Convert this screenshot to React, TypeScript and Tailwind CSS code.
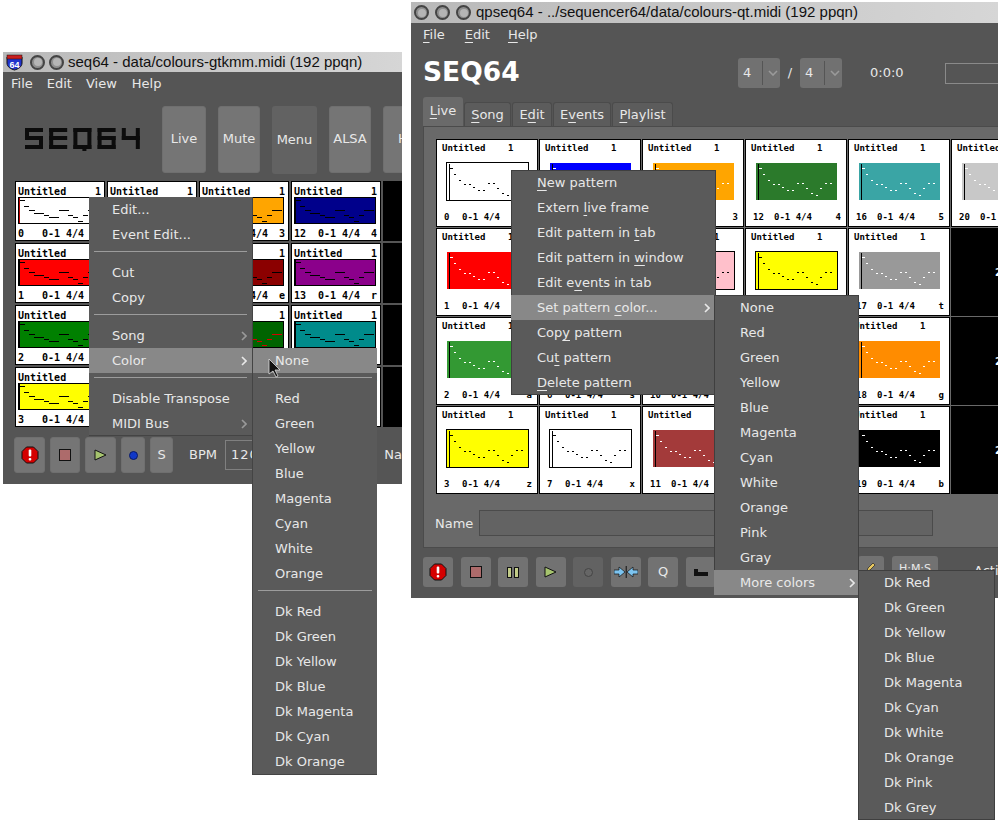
import React from "react";

const NOTES_QT: [number, number, number][] = [
  [4, 6, 3], [8, 12, 2], [13, 18, 2], [18, 22, 2], [23, 22, 2], [27, 25, 2], [32, 28, 2], [37, 28, 2],
  [42, 21, 2], [47, 21, 2], [51, 26, 2], [56, 31, 2], [61, 33, 2], [65, 26, 2], [70, 21, 2], [75, 21, 2],
];
const NOTES_GTK: [number, number, number][] = [
  [2, 3, 5], [6, 9, 5], [11, 13, 6], [16, 16, 10], [26, 18, 5], [31, 20, 10], [41, 13, 10], [50, 18, 5],
  [55, 20, 5], [60, 24, 5], [65, 18, 5], [70, 13, 10],
];

function QtPreview({ fill, border, note }: { fill: string; border: string; note: string }) {
  return (
    <svg width="83" height="39" className="block">
      <rect x="0.5" y="0.5" width="82" height="38" fill={fill} stroke={border} />
      <rect x="3" y="2" width="1" height="36" fill="#000" />
      {NOTES_QT.map(([x, y, w], i) => (
        <rect key={i} x={x} y={y} width={w} height="1" fill={note} />
      ))}
    </svg>
  );
}

function GtkPreview({ fill, bar, last }: { fill: string; bar: string; last?: string }) {
  return (
    <svg width="82" height="27" className="block">
      <rect x="0.5" y="0.5" width="81" height="26" fill={fill} stroke="#000" />
      <rect x="1" y="1" width="1" height="25" fill={bar} />
      {NOTES_GTK.map(([x, y, w], i) => (
        <rect key={i} x={x} y={y} width={w} height="1" fill={last && i > 6 ? last : "#000"} />
      ))}
    </svg>
  );
}

function GtkCell({ n, k, fill, bar = "#000", last }: { n: string; k: string; fill: string; bar?: string; last?: string }) {
  return (
    <div className="h-[60px] w-[90px] border border-black bg-white px-[2px] font-['DejaVu_Sans_Mono',monospace] text-[10px] font-bold leading-[12px] text-black">
      <div className="flex h-[15px] items-center justify-between pr-px pt-[5px]">
        <span>Untitled</span>
        <span>1</span>
      </div>
      <GtkPreview fill={fill} bar={bar} last={last} />
      <div className="flex h-[15px] items-center pr-px pt-[5px]">
        <span className="w-[24px]">{n}</span>
        <span className="whitespace-pre">0-1 4/4</span>
        <span className="ml-auto">{k}</span>
      </div>
    </div>
  );
}

function QtCell({ n, k, fill, border = "#fff", note = "#fff" }: { n: string; k: string; fill: string; border?: string; note?: string }) {
  return (
    <div className="h-[88px] w-[102px] border border-black bg-white font-['DejaVu_Sans_Mono',monospace] text-[9px] font-bold text-black">
      <div className="flex h-[22px] items-start pl-[5px] pt-[3px] leading-[11px]">
        <span className="w-[66px]">Untitled</span>
        <span>1</span>
      </div>
      <div className="ml-[9px]">
        <QtPreview fill={fill} border={border} note={note} />
      </div>
      <div className="mt-[11px] flex items-center pl-[7px] pr-[5px] leading-[11px]">
        <span className={n.length > 1 ? "w-[21px]" : "w-[18px]"}>{n}</span>
        <span className="whitespace-pre">0-1 4/4</span>
        <span className="ml-auto">{k}</span>
      </div>
    </div>
  );
}

function BlackCell({ label, h }: { label?: string; h: string }) {
  return (
    <div className={`flex w-[102px] items-center justify-center bg-black text-[10px] font-bold text-white ${h}`}>
      {label}
    </div>
  );
}

function Chevron({ dim }: { dim?: boolean }) {
  return (
    <svg width="6" height="10" viewBox="0 0 6 10" className="block">
      <path d="M1 1l4 4-4 4" fill="none" stroke={dim ? "#9a9a9a" : "#e8e8e8"} strokeWidth="1.6" />
    </svg>
  );
}

function Item({ pl, children, active, sub, dimSub, chevronRight = "pr-[5px]" }: { pl: string; children: React.ReactNode; active?: boolean; sub?: boolean; dimSub?: boolean; chevronRight?: string }) {
  return (
    <div className={`flex h-[25px] items-center whitespace-nowrap ${pl} ${chevronRight} ${active ? "bg-[#888888]" : ""}`}>
      <span>{children}</span>
      {sub && (
        <span className="ml-auto">
          <Chevron dim={dimSub} />
        </span>
      )}
    </div>
  );
}

function Sep() {
  return (
    <div className="h-[13px] px-[5px] pt-[4px]">
      <div className="h-px bg-[#9c9c9c]" />
    </div>
  );
}

const U = ({ children }: { children: React.ReactNode }) => <u className="underline-offset-[3px]">{children}</u>;

function WinCircle() {
  return (
    <span className="flex h-[15px] w-[15px] items-center justify-center rounded-full border-2 border-[#444] bg-[#8f8f8f]">
      <span className="h-[8px] w-[8px] rounded-full bg-[#b5b5b5]" />
    </span>
  );
}

function Panic() {
  return (
    <svg width="18" height="18" viewBox="0 0 18 18">
      <path d="M5.5 1h7L17 5.5v7L12.5 17h-7L1 12.5v-7z" fill="#d40000" stroke="#111" />
      <rect x="7.7" y="3.5" width="2.6" height="7" rx="1" fill="#fff" />
      <rect x="7.7" y="12" width="2.6" height="2.6" rx="1" fill="#fff" />
    </svg>
  );
}
const Stop = () => (
  <svg width="12" height="12"><rect x="0.5" y="0.5" width="11" height="11" fill="#ad6b6b" stroke="#111" /></svg>
);
const Play = () => (
  <svg width="13" height="12"><path d="M1 1l11 5-11 5z" fill="#a6c46e" stroke="#111" /></svg>
);
const Pause = () => (
  <svg width="12" height="11">
    <rect x="0.5" y="0.5" width="4" height="10" fill="#c2cc88" stroke="#111" />
    <rect x="7.5" y="0.5" width="4" height="10" fill="#c2cc88" stroke="#111" />
  </svg>
);

function GtkBtn({ w, children, h = "h-[36px]" }: { w: string; children: React.ReactNode; h?: string }) {
  return (
    <div className={`flex shrink-0 items-center justify-center rounded-[3px] border border-[#6f6f6f] bg-[#757575] ${w} ${h}`}>
      {children}
    </div>
  );
}

function QtBtn({ children, dark }: { children?: React.ReactNode; dark?: boolean }) {
  return (
    <div className={`flex h-[30px] w-[30px] shrink-0 items-center justify-center rounded-[3px] ${dark ? "bg-[#626262]" : "bg-[#727272]"}`}>
      {children}
    </div>
  );
}

function Combo() {
  return (
    <div className="flex h-[30px] w-[42px] shrink-0 items-center rounded-[3px] bg-[#717171] pl-[5px]">
      <span className="w-[19px]">4</span>
      <span className="h-[24px] w-px bg-[#555]" />
      <svg width="10" height="6" className="ml-[5px]"><path d="M1 1l4 4 4-4" fill="none" stroke="#9a9a9a" strokeWidth="1.6" /></svg>
    </div>
  );
}

function Logo() {
  const t = 4;
  const top = [0, 0, 18, t];
  const mid = [0, 8, 18, t];
  const bot = [0, 17, 18, t];
  const letters: number[][][] = [
    [top, [0, 0, t, 12], mid, [14, 8, t, 13], bot],
    [top, [0, 0, t, 21], mid, bot],
    [top, [0, 0, t, 21], [14, 0, t, 21], bot, [9, 17, t, 6]],
    [top, [0, 0, t, 21], mid, [14, 8, t, 13], bot],
    [[0, 0, t, 12], mid, [14, 0, t, 21]],
  ];
  return (
    <svg width="118" height="23" role="img" aria-label="SEQ64 logo" className="block shrink-0">
      {letters.map((l, i) => (
        <g key={i} transform={`translate(${i * 24.2},0)`}>
          {l.map((r, j) => (
            <rect key={j} x={r[0]} y={r[1]} width={r[2]} height={r[3]} fill="#0c0c0c" />
          ))}
        </g>
      ))}
    </svg>
  );
}

function GtkWindow() {
  return (
    <div className="absolute left-[3px] top-[52px] h-[432px] w-[399px] overflow-hidden bg-[#555555] text-[#e8e8e8]">
      <div className="flex h-[20px] items-center bg-linear-to-r from-[#b9b9b9] to-[#d6d6d6] font-['Liberation_Sans',sans-serif] text-[15px] text-[#111]">
        <svg width="17" height="17" viewBox="0 0 17 17" className="ml-[3px] shrink-0">
          <path d="M1 3h15v6c0 4-4 6-7.500 7C5 15 1 13 1 9z" fill="#2233cc" stroke="#111" />
          <rect x="1" y="1" width="15" height="4" fill="#c81e1e" stroke="#111" strokeWidth="0.5" />
          <text x="8.500" y="13.500" textAnchor="middle" fontSize="9" fontWeight="700" fill="#fff" fontFamily="'Liberation Sans',sans-serif">64</text>
        </svg>
        <span className="ml-[7px]"><WinCircle /></span>
        <span className="ml-[4px]"><WinCircle /></span>
        <span className="ml-[4px] whitespace-nowrap">seq64 - data/colours-gtkmm.midi (192 ppqn)</span>
      </div>
      <div className="flex h-[23px] items-center gap-[14px] pl-[8px]">
        <span>File</span>
        <span>Edit</span>
        <span>View</span>
        <span className="ml-px">Help</span>
      </div>
      <div className="flex h-[86px] items-center pl-[22px] pt-[3px]">
        <Logo />
        <div className="ml-[19px] flex shrink-0 gap-[12px]">
          <GtkBtn w="w-[44px]" h="h-[67px]">Live</GtkBtn>
          <GtkBtn w="w-[42px]" h="h-[67px]">Mute</GtkBtn>
          <div className="flex h-[68px] w-[45px] shrink-0 items-center justify-center rounded-[3px] bg-[#626262]">Menu</div>
          <GtkBtn w="w-[42px]" h="h-[67px]">ALSA</GtkBtn>
          <GtkBtn w="w-[42px]" h="h-[67px]"><span className="ml-[6px]">HE</span></GtkBtn>
        </div>
      </div>
      <div className="ml-[12px] grid w-[460px] grid-flow-col grid-cols-[90px_90px_90px_90px_90px] grid-rows-[60px_60px_60px_60px] gap-[2px]">
        <GtkCell n="0" k="1" fill="#fff" bar="#c00000" />
        <GtkCell n="1" k="q" fill="#ff0000" />
        <GtkCell n="2" k="a" fill="#008000" />
        <GtkCell n="3" k="z" fill="#ffff00" />
        <GtkCell n="4" k="2" fill="#0000ff" />
        <GtkCell n="5" k="w" fill="#ff00ff" />
        <GtkCell n="6" k="s" fill="#00ffff" />
        <GtkCell n="7" k="x" fill="#fff" />
        <GtkCell n="8" k="3" fill="#ffa500" />
        <GtkCell n="9" k="e" fill="#8b0000" />
        <GtkCell n="10" k="d" fill="#006400" last="#d40000" />
        <GtkCell n="11" k="c" fill="#808000" />
        <GtkCell n="12" k="4" fill="#00008b" />
        <GtkCell n="13" k="r" fill="#8b008b" />
        <GtkCell n="14" k="f" fill="#008b8b" />
        <GtkCell n="15" k="v" fill="#fff" />
        <div className="bg-black" />
        <div className="bg-black" />
        <div className="bg-black" />
        <div className="bg-black" />
      </div>
      <div className="ml-[11px] mt-[10px] flex items-center">
        <GtkBtn w="w-[31px]"><Panic /></GtkBtn>
        <div className="w-[6px]" />
        <GtkBtn w="w-[30px]"><Stop /></GtkBtn>
        <div className="w-[6px]" />
        <GtkBtn w="w-[31px]"><Play /></GtkBtn>
        <div className="w-[6px]" />
        <GtkBtn w="w-[24px]"><span className="h-[9px] w-[9px] rounded-full border border-[#0a1a66] bg-[#1038c8]" /></GtkBtn>
        <div className="w-[6px]" />
        <GtkBtn w="w-[23px]">S</GtkBtn>
        <span className="ml-[16px]">BPM</span>
        <div className="ml-[8px] flex h-[30px] w-[60px] items-center border border-[#808080] pl-[5px] tracking-[1px]">120</div>
        <span className="ml-[108px]">Na</span>
      </div>
    </div>
  );
}

function QtWindow() {
  return (
    <div className="absolute left-[411px] top-[2px] h-[596px] w-[587px] overflow-hidden bg-[#555555] text-[#e8e8e8]">
      <div className="flex h-[21px] items-center gap-[6px] bg-linear-to-r from-[#b9b9b9] to-[#d6d6d6] pl-[3px] font-['Liberation_Sans',sans-serif] text-[15px] text-[#111]">
        <WinCircle />
        <WinCircle />
        <WinCircle />
        <span className="-ml-px whitespace-nowrap">qpseq64 - ../sequencer64/data/colours-qt.midi (192 ppqn)</span>
      </div>
      <div className="flex h-[24px] items-center gap-[20px] pl-[12px]">
        <span><U>F</U>ile</span>
        <span><U>E</U>dit</span>
        <span className="-ml-[2px]"><U>H</U>elp</span>
      </div>
      <div className="flex h-[50px] items-center pl-[12px] pt-[2px]">
        <span className="-mt-[2px] w-[315px] shrink-0 text-[26.500px] font-bold leading-none text-white">SEQ64</span>
        <Combo />
        <span className="w-[20px] shrink-0 text-center">/</span>
        <Combo />
        <span className="ml-[28px] w-[75px] shrink-0">0:0:0</span>
        <div className="h-[21px] w-[60px] shrink-0 border border-[#8a8a8a]" />
      </div>
      <div className="ml-[12px] flex h-[29px] items-end">
        <div className="flex h-[29px] w-[40px] items-center justify-center rounded-t-[3px] bg-[#6a6a6a]"><span className="-mt-px"><U>L</U>ive</span></div>
        {[
          ["w-[47px]", "S", "ong"],
          ["w-[40px]", "E", "dit"],
          ["w-[58px]", "E", "vents"],
          ["w-[61px]", "P", "laylist"],
        ].map(([w, a, b], i) => (
          <div key={i} className={`ml-px flex h-[24px] items-center justify-center rounded-t-[3px] border border-b-0 border-[#4b4b4b] bg-[#5c5c5c] ${w}`}>
            {i === 1 ? <span>E<U>d</U>it</span> : i === 2 ? <span>E<U>v</U>ents</span> : <span><U>{a}</U>{b}</span>}
          </div>
        ))}
      </div>
      <div className="ml-[12px] h-[422px] w-[600px] border-l border-t border-b border-[#4b4b4b] bg-[#696969] pl-[12px] pt-[12px]">
        <div className="grid w-[620px] grid-flow-col grid-cols-[repeat(6,102px)] grid-rows-[repeat(4,88px)] gap-px">
          <QtCell n="0" k="1" fill="#fff" border="#000" note="#000" />
          <QtCell n="1" k="q" fill="#ff0000" />
          <QtCell n="2" k="a" fill="#339933" />
          <QtCell n="3" k="z" fill="#ffff00" border="#000" note="#000" />
          <QtCell n="4" k="2" fill="#0000ff" />
          <QtCell n="5" k="w" fill="#ff00ff" />
          <QtCell n="6" k="s" fill="#00ffff" />
          <QtCell n="7" k="x" fill="#fff" border="#000" note="#000" />
          <QtCell n="8" k="3" fill="#ffa500" />
          <QtCell n="9" k="e" fill="#ffc0cb" border="#000" note="#000" />
          <QtCell n="10" k="d" fill="#808080" />
          <QtCell n="11" k="c" fill="#a33a3a" />
          <QtCell n="12" k="4" fill="#2b7a2b" />
          <QtCell n="13" k="r" fill="#ffff00" border="#000" note="#000" />
          <QtCell n="14" k="f" fill="#808080" />
          <QtCell n="15" k="v" fill="#808080" />
          <QtCell n="16" k="5" fill="#3aa5a5" />
          <QtCell n="17" k="t" fill="#999999" />
          <QtCell n="18" k="g" fill="#ff8c00" />
          <QtCell n="19" k="b" fill="#000000" />
          <QtCell n="20" k="6" fill="#c8c8c8" />
          <BlackCell h="h-[88px]" label="21" />
          <BlackCell h="h-[88px]" label="22" />
          <BlackCell h="h-[88px]" label="23" />
        </div>
        <div className="-ml-px mt-[16px] flex h-[26px] items-center">
          <span className="w-[44px] pt-px">Name</span>
          <div className="h-[26px] w-[454px] border border-[#4b4b4b] bg-[#636363]" />
        </div>
      </div>
      <div className="ml-[12px] mt-[9px] flex items-center gap-[7.500px]">
        <QtBtn><Panic /></QtBtn>
        <QtBtn><Stop /></QtBtn>
        <QtBtn><Pause /></QtBtn>
        <QtBtn><Play /></QtBtn>
        <QtBtn dark><span className="h-[9px] w-[9px] rounded-full border border-[#444] bg-[#666]" /></QtBtn>
        <QtBtn>
          <svg width="24" height="12" viewBox="0 0 24 12">
            <path d="M0 4h5V1l6 5-6 5V8H0z" fill="#7cc4f0" stroke="#111" strokeWidth="0.7" />
            <rect x="11.700" y="0" width="1" height="12" fill="#111" />
            <path d="M24 4h-5V1l-6 5 6 5V8h5z" fill="#7cc4f0" stroke="#111" strokeWidth="0.7" />
          </svg>
        </QtBtn>
        <QtBtn>Q</QtBtn>
        <QtBtn>
          <svg width="14" height="7"><rect x="0" y="0" width="4" height="7" fill="#111" /><rect x="0" y="3" width="14" height="4" fill="#111" /></svg>
        </QtBtn>
      </div>
    </div>
  );
}

function QtLowerRight() {
  return (
    <div className="absolute left-[858px] top-[556px] flex items-start gap-[8px] text-[#e8e8e8]">
      <div className="flex h-[30px] w-[26px] items-start justify-center rounded-[3px] bg-[#727272] pt-[5px]">
        <svg width="12" height="12" viewBox="0 0 12 12"><path d="M2 10l1-3 5-5 2 2-5 5z" fill="#e8c860" stroke="#222" strokeWidth="0.7" /></svg>
      </div>
      <div className="flex h-[30px] w-[46px] items-start justify-center rounded-[3px] bg-[#727272] pt-[5px] text-[11px]">H:M:S</div>
      <span className="ml-[28px] pt-[5px] text-[13px]">Acti</span>
    </div>
  );
}

const GTK_MAIN = (
  <div className="absolute left-[89px] top-[197px] h-[239px] w-[164px] border-r border-b border-[#444] bg-[#5a5a5a] text-[#e8e8e8]">
    <Item pl="pl-[23px]">Edit...</Item>
    <Item pl="pl-[23px]">Event Edit...</Item>
    <Sep />
    <Item pl="pl-[23px]">Cut</Item>
    <Item pl="pl-[23px]">Copy</Item>
    <Sep />
    <Item pl="pl-[23px]" sub dimSub>Song</Item>
    <Item pl="pl-[23px]" active sub>Color</Item>
    <Sep />
    <Item pl="pl-[23px]">Disable Transpose</Item>
    <Item pl="pl-[23px]" sub dimSub>MIDI Bus</Item>
  </div>
);

const GTK_SUB = (
  <div className="absolute left-[252px] top-[348px] w-[125px] border-l border-b border-[#444] bg-[#5a5a5a] text-[#e8e8e8]">
    <Item pl="pl-[22px]" active>None</Item>
    <Sep />
    {["Red", "Green", "Yellow", "Blue", "Magenta", "Cyan", "White", "Orange"].map((t) => (
      <Item key={t} pl="pl-[22px]">{t}</Item>
    ))}
    <Sep />
    {["Dk Red", "Dk Green", "Dk Yellow", "Dk Blue", "Dk Magenta", "Dk Cyan", "Dk Orange"].map((t) => (
      <Item key={t} pl="pl-[22px]">{t}</Item>
    ))}
  </div>
);

const QT_MAIN = (
  <div className="absolute left-[511px] top-[170px] w-[205px] bg-[#5a5a5a] text-[#e8e8e8] ring-1 ring-inset ring-[#3f3f3f]">
    <Item pl="pl-[26px]"><U>N</U>ew pattern</Item>
    <Item pl="pl-[26px]">Extern <U>l</U>ive frame</Item>
    <Item pl="pl-[26px]">Edit pattern in <U>t</U>ab</Item>
    <Item pl="pl-[26px]">Edit pattern in <U>w</U>indow</Item>
    <Item pl="pl-[26px]">Edit e<U>v</U>ents in tab</Item>
    <Item pl="pl-[26px]" active sub chevronRight="pr-[6px]">Set pattern <U>c</U>olor...</Item>
    <Item pl="pl-[26px]">Cop<U>y</U> pattern</Item>
    <Item pl="pl-[26px]">Cu<U>t</U> pattern</Item>
    <Item pl="pl-[26px]"><U>D</U>elete pattern</Item>
  </div>
);

const QT_SUB = (
  <div className="absolute left-[714px] top-[295px] w-[145px] bg-[#5a5a5a] text-[#e8e8e8] ring-1 ring-inset ring-[#3f3f3f]">
    {["None", "Red", "Green", "Yellow", "Blue", "Magenta", "Cyan", "White", "Orange", "Pink", "Gray"].map((t) => (
      <Item key={t} pl="pl-[26px]">{t}</Item>
    ))}
    <Item pl="pl-[26px]" active sub chevronRight="pr-[4px]">More colors</Item>
  </div>
);

const QT_SUB2 = (
  <div className="absolute left-[858px] top-[570px] w-[137px] bg-[#5a5a5a] text-[#e8e8e8] ring-1 ring-inset ring-[#3f3f3f]">
    {["Dk Red", "Dk Green", "Dk Yellow", "Dk Blue", "Dk Magenta", "Dk Cyan", "Dk White", "Dk Orange", "Dk Pink", "Dk Grey"].map((t) => (
      <Item key={t} pl="pl-[26px]">{t}</Item>
    ))}
  </div>
);

export default function App() {
  return (
    <div className="relative h-[823px] w-[998px] overflow-hidden bg-white font-['DejaVu_Sans',sans-serif] text-[13px]">
      <GtkWindow />
      <QtWindow />
      <QtLowerRight />
      {GTK_MAIN}
      {GTK_SUB}
      <svg width="13" height="20" viewBox="0 0 13 20" className="absolute left-[268px] top-[358px]">
        <path d="M1 1v15l4-3 3 6 2-1-3-6h5z" fill="#111" stroke="#ddd" strokeWidth="0.8" />
      </svg>
      {QT_MAIN}
      {QT_SUB}
      {QT_SUB2}
    </div>
  );
}
